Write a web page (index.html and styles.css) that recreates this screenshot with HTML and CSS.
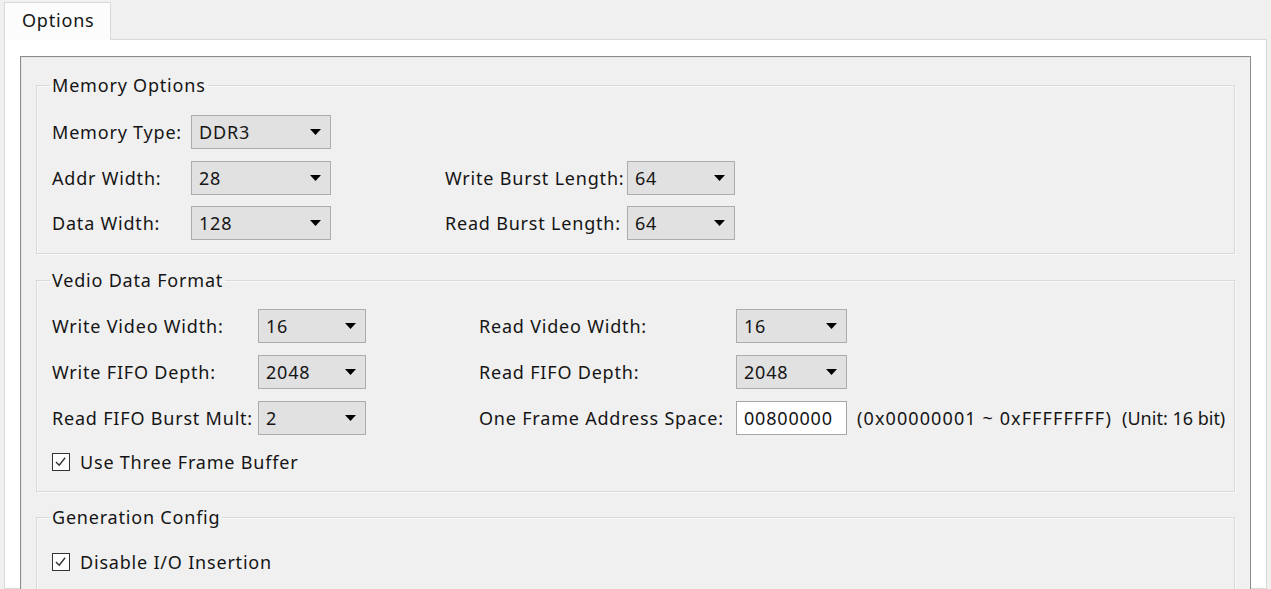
FILE: index.html
```html
<!DOCTYPE html>
<html>
<head>
<meta charset="utf-8">
<link rel="stylesheet" href="styles.css">
</head>
<body>
<div class="window">
  <div class="tabbar">
    <div class="tab">Options</div>
  </div>
  <div class="pane">
    <div class="frame">
      <fieldset class="group group-mem">
        <legend>Memory Options</legend>
        <div class="grid grid-mem">
          <span class="lbl">Memory Type:</span>
          <div class="combo"><span>DDR3</span><svg class="arrow" viewBox="0 0 11 6"><path d="M0 0H11L5.5 6Z"/></svg></div>
          <span></span><span></span><span></span>

          <span class="lbl">Addr Width:</span>
          <div class="combo"><span>28</span><svg class="arrow" viewBox="0 0 11 6"><path d="M0 0H11L5.5 6Z"/></svg></div>
          <span></span>
          <span class="lbl">Write Burst Length:</span>
          <div class="combo"><span>64</span><svg class="arrow" viewBox="0 0 11 6"><path d="M0 0H11L5.5 6Z"/></svg></div>

          <span class="lbl">Data Width:</span>
          <div class="combo"><span>128</span><svg class="arrow" viewBox="0 0 11 6"><path d="M0 0H11L5.5 6Z"/></svg></div>
          <span></span>
          <span class="lbl">Read Burst Length:</span>
          <div class="combo"><span>64</span><svg class="arrow" viewBox="0 0 11 6"><path d="M0 0H11L5.5 6Z"/></svg></div>
        </div>
      </fieldset>

      <fieldset class="group group-vid">
        <legend>Vedio Data Format</legend>
        <div class="grid grid-vid">
          <span class="lbl">Write Video Width:</span>
          <div class="combo"><span>16</span><svg class="arrow" viewBox="0 0 11 6"><path d="M0 0H11L5.5 6Z"/></svg></div>
          <span></span>
          <span class="lbl">Read Video Width:</span>
          <div class="combo"><span>16</span><svg class="arrow" viewBox="0 0 11 6"><path d="M0 0H11L5.5 6Z"/></svg></div>
          <span></span>

          <span class="lbl">Write FIFO Depth:</span>
          <div class="combo"><span>2048</span><svg class="arrow" viewBox="0 0 11 6"><path d="M0 0H11L5.5 6Z"/></svg></div>
          <span></span>
          <span class="lbl">Read FIFO Depth:</span>
          <div class="combo"><span>2048</span><svg class="arrow" viewBox="0 0 11 6"><path d="M0 0H11L5.5 6Z"/></svg></div>
          <span></span>

          <span class="lbl">Read FIFO Burst Mult:</span>
          <div class="combo"><span>2</span><svg class="arrow" viewBox="0 0 11 6"><path d="M0 0H11L5.5 6Z"/></svg></div>
          <span></span>
          <span class="lbl">One Frame Address Space:</span>
          <div class="textbox">00800000</div>
          <span class="info"><span class="hex">(0x00000001 ~ 0xFFFFFFFF)</span><span class="unit">(Unit: 16 bit)</span></span>
        </div>
        <label class="check">
          <span class="box"><svg viewBox="0 0 18 18"><path d="M3.5 9.5L7.5 13.5L14.5 4.5" /></svg></span>
          <span>Use Three Frame Buffer</span>
        </label>
      </fieldset>

      <fieldset class="group group-last">
        <legend>Generation Config</legend>
        <label class="check">
          <span class="box"><svg viewBox="0 0 18 18"><path d="M3.5 9.5L7.5 13.5L14.5 4.5" /></svg></span>
          <span>Disable I/O Insertion</span>
        </label>
      </fieldset>
    </div>
  </div>
</div>
</body>
</html>
```

FILE: styles.css
```css
* { box-sizing: border-box; }

html, body {
  margin: 0;
  height: 100%;
  overflow: hidden;
}

body {
  background: #f0f0f0;
  font-family: "Noto Sans", "Open Sans", sans-serif;
  font-size: 18px;
  letter-spacing: 0.8px;
  color: #151515;
}

.window {
  display: flex;
  flex-direction: column;
  height: 100%;
  padding: 2px 4px 0 4px;
}

.tabbar {
  display: flex;
  height: 38px;
  flex: none;
}

.tab {
  width: 107px;
  height: 38px;
  background: #fcfcfc;
  border: 1px solid #d9d9d9;
  border-bottom: none;
  padding: 0 0 0 17px;
  line-height: 34px;
  position: relative;
  z-index: 1;
}

.pane {
  flex: 1;
  background: #fff;
  border: 1px solid #d9d9d9;
  padding: 16px 15px 0 15px;
  margin-top: -1px;
  min-height: 0;
}

.frame {
  background: #f0f0f0;
  border: 1px solid #8c8c8c;
  box-shadow: inset 1px 1px 0 #e6e6e6;
  padding: 16px 15px 20px 15px;
  display: flex;
  flex-direction: column;
  gap: 14px;
  height: 600px;
}

.group {
  margin: 0;
  border: 1px solid #d8d8d8;
  box-shadow: inset 1px 1px 0 #fafafa, 1px 1px 0 #fafafa;
  padding: 18px 15px 13px 15px;
  min-width: 0;
}

.group-vid {
  padding-top: 17px;
  padding-bottom: 14px;
}

.group legend {
  padding: 0 2px;
  margin-left: -2px;
  line-height: 24px;
  height: 24px;
}

.grid {
  display: grid;
  align-items: center;
  grid-auto-rows: 34px;
  row-gap: 12px;
}

.grid-mem {
  grid-template-columns: 139px 140px 114px 182px 108px;
  row-gap: 11.5px;
}

.grid-vid {
  grid-template-columns: 206px 108px 113px 257px 111px auto;
}

.lbl {
  white-space: nowrap;
}

.combo {
  height: 34px;
  border: 1px solid #adadad;
  background: #e1e1e1;
  display: flex;
  align-items: center;
  justify-content: space-between;
  padding: 0 9px 0 7px;
}

.arrow {
  width: 11px;
  height: 6px;
  fill: #000;
}

.textbox {
  height: 34px;
  border: 1px solid #a6a6a6;
  background: #fff;
  display: flex;
  align-items: center;
  padding: 0 7px;
}

.info {
  display: flex;
  gap: 10px;
  padding-left: 10px;
  white-space: nowrap;
}

.hex {
  letter-spacing: 1.1px;
}

.unit {
  letter-spacing: 0;
}

.check {
  display: flex;
  align-items: center;
  gap: 10px;
  height: 30px;
  margin-top: 12px;
}

.group-last .check {
  margin-top: 0;
}

.group-last {
  padding-top: 18px;
  margin-top: -1px;
}

.box {
  width: 18px;
  height: 18px;
  border: 1.5px solid #333;
  background: #fff;
  display: flex;
}

.box svg {
  width: 15px;
  height: 15px;
  fill: none;
  stroke: #333;
  stroke-width: 1.7;
}
```
